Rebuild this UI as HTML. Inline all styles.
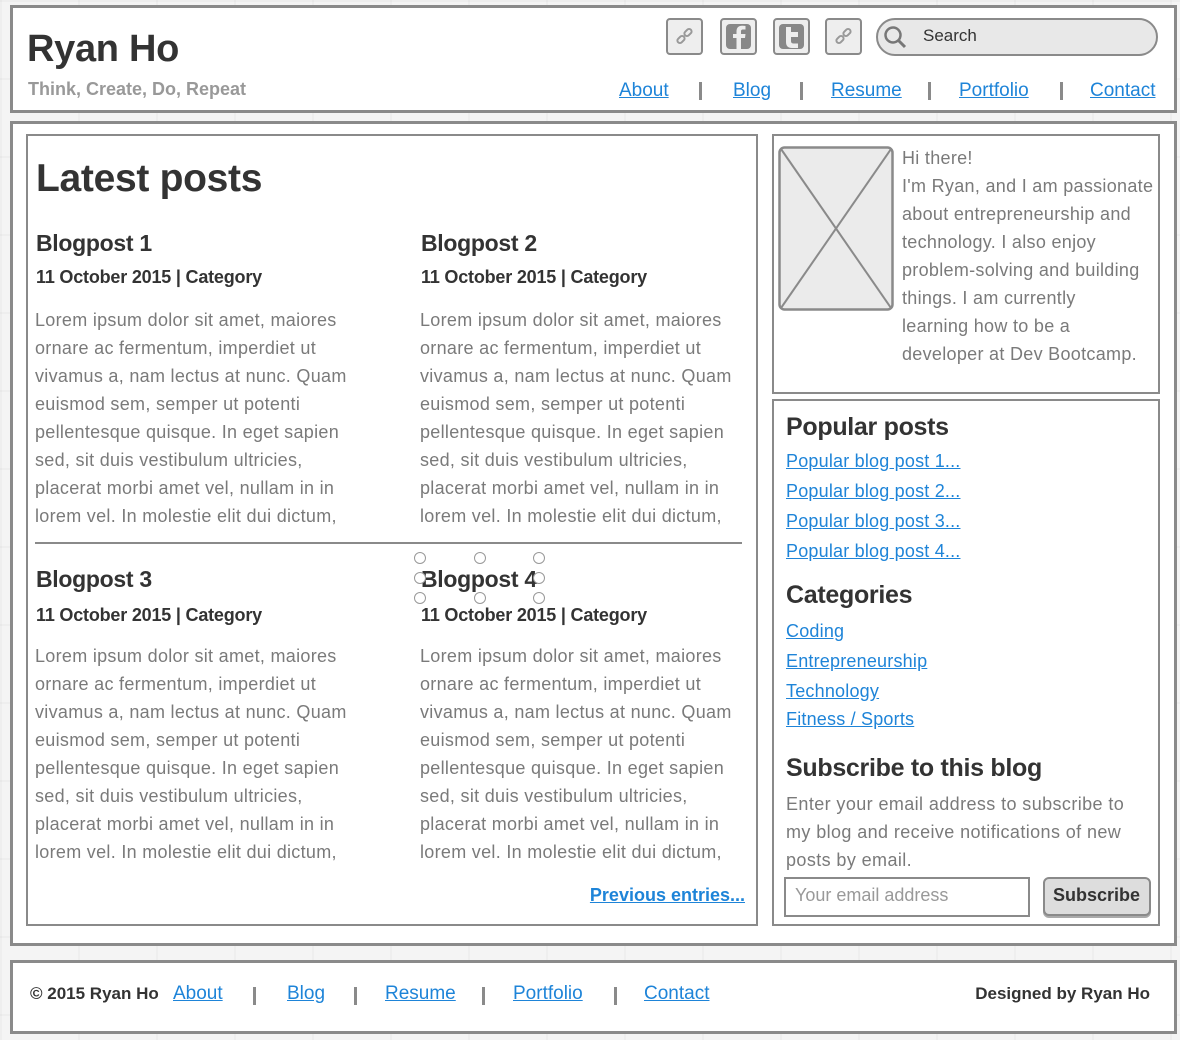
<!DOCTYPE html>
<html><head><meta charset="utf-8"><style>
*{margin:0;padding:0;box-sizing:border-box}
body{width:1180px;height:1040px;overflow:hidden;position:relative;background:#f4f4f4;font-family:"Liberation Sans",sans-serif;color:#333;
background-image:linear-gradient(90deg,rgba(0,0,0,0.025) 2px,transparent 2px),linear-gradient(rgba(0,0,0,0.025) 2px,transparent 2px);background-size:78px 78px;}
.b{position:absolute;background:#fff;border:3px solid #8a8a8a}
.b2{position:absolute;background:#fff;border:2px solid #8a8a8a}
.t{position:absolute;white-space:nowrap}
a{color:#1e84d8;text-decoration:underline}
.nav{font-size:19px;line-height:24px}
.sep{position:absolute;width:3px;height:18px;background:#8a8a8a}
.lorem{font-size:18px;line-height:28px;color:#7a7a7a;letter-spacing:0.3px}
.h2{font-size:23px;font-weight:bold;color:#333;letter-spacing:-0.3px}
.date{font-size:18px;font-weight:bold;color:#333;letter-spacing:-0.2px}
.ic{position:absolute;top:18px;width:37px;height:37px;border:2px solid #8a8a8a;border-radius:4px;background:#eee}
.side{font-size:18px;line-height:28px;color:#7a7a7a;letter-spacing:0.3px}
.sl{font-size:18px;letter-spacing:0.2px}
.hh{font-size:25px;font-weight:bold;color:#333;letter-spacing:-0.3px}
.h{position:absolute;width:12px;height:12px;border:1.5px solid #999;border-radius:50%;background:#fff}
</style></head><body>

<div class="b" style="left:10px;top:5px;width:1167px;height:108px"></div>
<div class="t" style="left:27px;top:28px;font-size:38px;font-weight:bold;color:#333;letter-spacing:-0.3px">Ryan Ho</div>
<div class="t" style="left:28px;top:79px;font-size:18px;font-weight:bold;color:#999">Think, Create, Do, Repeat</div>

<div class="ic" style="left:666px"><svg width="33" height="33" viewBox="0 0 33 33"><g fill="none" stroke="#999" stroke-width="2"><rect x="9" y="17" width="8" height="5" rx="2.5" transform="rotate(-45 13 19.5)"/><rect x="16" y="10" width="8" height="5" rx="2.5" transform="rotate(-45 20 12.5)"/></g></svg></div>
<div class="ic" style="left:720px"><svg width="33" height="33" viewBox="0 0 33 33"><rect x="4" y="4" width="25" height="25" rx="4" fill="#888"/><path d="M19 29V18h4l.5-4H19v-2.5c0-1.2.4-2 2-2h2.5V6c-.5 0-2-.2-3.6-.2-3.5 0-5.4 2-5.4 5.6V14h-3.5v4h3.5v11z" fill="#eee"/></svg></div>
<div class="ic" style="left:773px"><svg width="33" height="33" viewBox="0 0 33 33"><rect x="4" y="4" width="25" height="25" rx="4" fill="#888"/><path d="M11 7h5v5h7v5h-7v4c0 2 1 2.5 3 2.5h4V28h-6c-4 0-6-2-6-6z" fill="#eee"/></svg></div>
<div class="ic" style="left:825px"><svg width="33" height="33" viewBox="0 0 33 33"><g fill="none" stroke="#999" stroke-width="2"><rect x="9" y="17" width="8" height="5" rx="2.5" transform="rotate(-45 13 19.5)"/><rect x="16" y="10" width="8" height="5" rx="2.5" transform="rotate(-45 20 12.5)"/></g></svg></div>
<div style="position:absolute;left:876px;top:18px;width:282px;height:38px;border:2px solid #8a8a8a;border-radius:19px;background:#e8e8e8"></div>
<svg style="position:absolute;left:880px;top:22px" width="30" height="30" viewBox="0 0 30 30"><circle cx="13" cy="13" r="7.5" fill="none" stroke="#777" stroke-width="2.5"/><line x1="18.5" y1="18.5" x2="25" y2="25" stroke="#777" stroke-width="3"/></svg>
<div class="t" style="left:923px;top:26px;font-size:17px;color:#333">Search</div>

<div class="t nav" style="left:619px;top:79px"><a>About</a></div>
<div class="sep" style="left:699px;top:82px"></div>
<div class="t nav" style="left:733px;top:79px"><a>Blog</a></div>
<div class="sep" style="left:800px;top:82px"></div>
<div class="t nav" style="left:831px;top:79px"><a>Resume</a></div>
<div class="sep" style="left:928px;top:82px"></div>
<div class="t nav" style="left:959px;top:79px"><a>Portfolio</a></div>
<div class="sep" style="left:1060px;top:82px"></div>
<div class="t nav" style="left:1090px;top:79px"><a>Contact</a></div>

<div class="b" style="left:10px;top:121px;width:1167px;height:825px"></div>
<div class="b2" style="left:26px;top:134px;width:732px;height:792px"></div>
<div class="t" style="left:36px;top:157px;font-size:39px;font-weight:bold;color:#333;letter-spacing:-0.3px">Latest posts</div>

<div class="t h2" style="left:36px;top:230px">Blogpost 1</div>
<div class="t date" style="left:36px;top:267px">11 October 2015 | Category</div>
<div class="t lorem" style="left:35px;top:306px">Lorem ipsum dolor sit amet, maiores<br>ornare ac fermentum, imperdiet ut<br>vivamus a, nam lectus at nunc. Quam<br>euismod sem, semper ut potenti<br>pellentesque quisque. In eget sapien<br>sed, sit duis vestibulum ultricies,<br>placerat morbi amet vel, nullam in in<br>lorem vel. In molestie elit dui dictum,</div>

<div class="t h2" style="left:421px;top:230px">Blogpost 2</div>
<div class="t date" style="left:421px;top:267px">11 October 2015 | Category</div>
<div class="t lorem" style="left:420px;top:306px">Lorem ipsum dolor sit amet, maiores<br>ornare ac fermentum, imperdiet ut<br>vivamus a, nam lectus at nunc. Quam<br>euismod sem, semper ut potenti<br>pellentesque quisque. In eget sapien<br>sed, sit duis vestibulum ultricies,<br>placerat morbi amet vel, nullam in in<br>lorem vel. In molestie elit dui dictum,</div>

<div style="position:absolute;left:35px;top:542px;width:707px;height:2px;background:#8a8a8a"></div>

<div class="t h2" style="left:36px;top:566px">Blogpost 3</div>
<div class="t date" style="left:36px;top:605px">11 October 2015 | Category</div>
<div class="t lorem" style="left:35px;top:642px">Lorem ipsum dolor sit amet, maiores<br>ornare ac fermentum, imperdiet ut<br>vivamus a, nam lectus at nunc. Quam<br>euismod sem, semper ut potenti<br>pellentesque quisque. In eget sapien<br>sed, sit duis vestibulum ultricies,<br>placerat morbi amet vel, nullam in in<br>lorem vel. In molestie elit dui dictum,</div>

<div class="t h2" style="left:421px;top:566px">Blogpost 4</div>
<div class="h" style="left:414px;top:552px"></div><div class="h" style="left:474px;top:552px"></div><div class="h" style="left:533px;top:552px"></div>
<div class="h" style="left:414px;top:572px"></div><div class="h" style="left:533px;top:572px"></div>
<div class="h" style="left:414px;top:592px"></div><div class="h" style="left:474px;top:592px"></div><div class="h" style="left:533px;top:592px"></div>
<div class="t date" style="left:421px;top:605px">11 October 2015 | Category</div>
<div class="t lorem" style="left:420px;top:642px">Lorem ipsum dolor sit amet, maiores<br>ornare ac fermentum, imperdiet ut<br>vivamus a, nam lectus at nunc. Quam<br>euismod sem, semper ut potenti<br>pellentesque quisque. In eget sapien<br>sed, sit duis vestibulum ultricies,<br>placerat morbi amet vel, nullam in in<br>lorem vel. In molestie elit dui dictum,</div>

<div class="t" style="right:435px;top:885px;font-size:18px;font-weight:bold"><a>Previous entries...</a></div>

<div class="b2" style="left:772px;top:134px;width:388px;height:260px"></div>
<svg style="position:absolute;left:778px;top:146px" width="116" height="165" viewBox="0 0 116 165"><rect x="1.5" y="1.5" width="113" height="162" rx="5" fill="#ebebeb" stroke="#8a8a8a" stroke-width="2.5"/><line x1="3" y1="3" x2="113" y2="162" stroke="#8a8a8a" stroke-width="2"/><line x1="113" y1="3" x2="3" y2="162" stroke="#8a8a8a" stroke-width="2"/></svg>
<div class="t side" style="left:902px;top:144px">Hi there!<br>I'm Ryan, and I am passionate<br>about entrepreneurship and<br>technology. I also enjoy<br>problem-solving and building<br>things. I am currently<br>learning how to be a<br>developer at Dev Bootcamp.</div>

<div class="b2" style="left:772px;top:399px;width:388px;height:527px"></div>
<div class="t hh" style="left:786px;top:413px">Popular posts</div>
<div class="t sl" style="left:786px;top:451px"><a>Popular blog post 1...</a></div>
<div class="t sl" style="left:786px;top:481px"><a>Popular blog post 2...</a></div>
<div class="t sl" style="left:786px;top:511px"><a>Popular blog post 3...</a></div>
<div class="t sl" style="left:786px;top:541px"><a>Popular blog post 4...</a></div>
<div class="t hh" style="left:786px;top:581px">Categories</div>
<div class="t sl" style="left:786px;top:621px"><a>Coding</a></div>
<div class="t sl" style="left:786px;top:651px"><a>Entrepreneurship</a></div>
<div class="t sl" style="left:786px;top:681px"><a>Technology</a></div>
<div class="t sl" style="left:786px;top:709px"><a>Fitness / Sports</a></div>
<div class="t hh" style="left:786px;top:754px">Subscribe to this blog</div>
<div class="t side" style="left:786px;top:790px;letter-spacing:0.4px">Enter your email address to subscribe to<br>my blog and receive notifications of new<br>posts by email.</div>
<div style="position:absolute;left:784px;top:877px;width:246px;height:40px;border:2px solid #8a8a8a;background:#fff"></div>
<div class="t" style="left:795px;top:885px;font-size:18px;color:#999">Your email address</div>
<div style="position:absolute;left:1043px;top:877px;width:108px;height:39px;border:2px solid #8a8a8a;border-radius:6px;background:#ddd;box-shadow:0 2px 0 #aaa"></div>
<div class="t" style="left:1053px;top:885px;font-size:18px;font-weight:bold;color:#333">Subscribe</div>

<div class="b" style="left:10px;top:960px;width:1167px;height:74px"></div>
<div class="t" style="left:30px;top:984px;font-size:17px;font-weight:bold;color:#333">© 2015 Ryan Ho</div>
<div class="t nav" style="left:173px;top:982px"><a>About</a></div>
<div class="sep" style="left:253px;top:987px"></div>
<div class="t nav" style="left:287px;top:982px"><a>Blog</a></div>
<div class="sep" style="left:354px;top:987px"></div>
<div class="t nav" style="left:385px;top:982px"><a>Resume</a></div>
<div class="sep" style="left:482px;top:987px"></div>
<div class="t nav" style="left:513px;top:982px"><a>Portfolio</a></div>
<div class="sep" style="left:614px;top:987px"></div>
<div class="t nav" style="left:644px;top:982px"><a>Contact</a></div>
<div class="t" style="right:30px;top:984px;font-size:17px;font-weight:bold;color:#333">Designed by Ryan Ho</div>
</body></html>
